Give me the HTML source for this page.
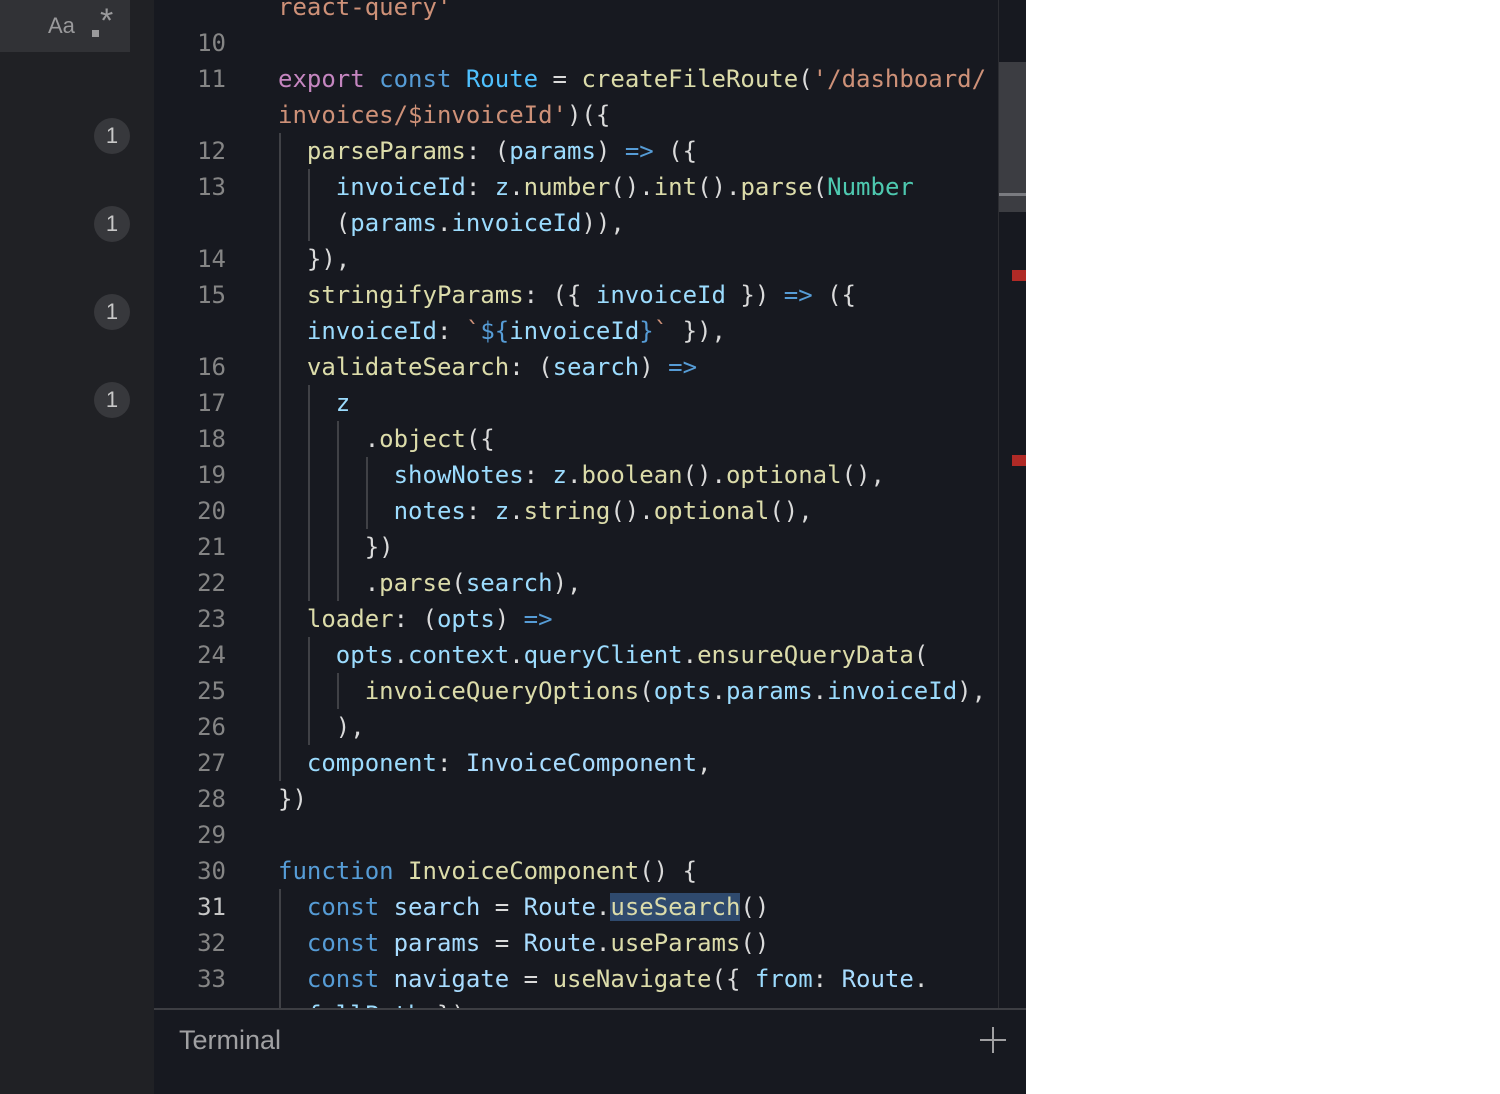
<!DOCTYPE html>
<html><head><meta charset="utf-8"><style>
html,body{margin:0;padding:0;width:1500px;height:1094px;overflow:hidden;background:#fff;}
#side{position:absolute;left:0;top:0;width:154px;height:1094px;background:#202125;}
#tb{position:absolute;left:0;top:0;width:130px;height:52px;background:#313236;}
#tb .aa{position:absolute;left:48px;top:13px;font:22px "Liberation Sans",sans-serif;color:#9a9a9c;}
#tb .sq{position:absolute;left:92px;top:30px;width:7px;height:7px;background:#9a9a9c;}
#tb .st{position:absolute;left:100px;top:4px;font:34px "Liberation Sans",sans-serif;color:#9a9a9c;line-height:34px;}
.badge{position:absolute;left:94px;width:36px;height:36px;border-radius:50%;background:#37383c;color:#c8c8c8;font:22px "Liberation Sans",sans-serif;text-align:center;line-height:36px;}
#ed{position:absolute;left:154px;top:0;width:872px;height:1094px;background:#171920;overflow:hidden;}
.row{position:absolute;left:0;height:36px;line-height:36px;width:844px;white-space:pre;font-family:"DejaVu Sans Mono","Liberation Mono",monospace;font-size:24px;color:#dadada;}
.ln{position:absolute;left:0;width:72px;text-align:right;color:#858585;}
.cd{position:absolute;left:124px;}
.g{position:absolute;width:2px;background:#404146;}
.k{color:#c586c0}.b{color:#569cd6}.v{color:#9cdcfe}.f{color:#dcdcaa}.s{color:#ce9178}.t{color:#4ec9b0}.c{color:#4fc1ff}.c2{color:#a8dcff}
#sb{position:absolute;left:844px;top:0;width:28px;height:1008px;border-left:1px solid #2c2d32;}
#term{position:absolute;left:0;top:1008px;width:872px;height:86px;background:#171920;border-top:2px solid #3d3e43;}
#term .tt{position:absolute;left:25px;top:15px;font:27px "Liberation Sans",sans-serif;color:#a0a0a2;}
</style></head><body>
<div id="side">
 <div id="tb"><span class="aa">Aa</span><span class="sq"></span><span class="st">*</span></div>
 <div class="badge" style="top:118px">1</div>
 <div class="badge" style="top:206px">1</div>
 <div class="badge" style="top:294px">1</div>
 <div class="badge" style="top:382px">1</div>
</div>
<div id="ed">
 <div class="g" style="left:125px;top:133px;height:648px"></div>
 <div class="g" style="left:154px;top:169px;height:72px"></div>
 <div class="g" style="left:154px;top:385px;height:216px"></div>
 <div class="g" style="left:154px;top:637px;height:108px"></div>
 <div class="g" style="left:183px;top:421px;height:180px"></div>
 <div class="g" style="left:183px;top:673px;height:36px"></div>
 <div class="g" style="left:212px;top:457px;height:72px"></div>
 <div class="g" style="left:125px;top:889px;height:130px"></div>

 <div class="row" style="top:-11px"><span class="cd s">react-query'</span></div>
 <div class="row" style="top:25px"><span class="ln">10</span></div>
 <div class="row" style="top:61px"><span class="ln">11</span><span class="cd"><span class="k">export</span> <span class="b">const</span> <span class="c">Route</span> = <span class="f">createFileRoute</span>(<span class="s">'/dashboard/</span></span></div>
 <div class="row" style="top:97px"><span class="cd"><span class="s">invoices/$invoiceId'</span>)({</span></div>
 <div class="row" style="top:133px"><span class="ln">12</span><span class="cd">  <span class="f">parseParams</span>: (<span class="v">params</span>) <span class="b">=&gt;</span> ({</span></div>
 <div class="row" style="top:169px"><span class="ln">13</span><span class="cd">    <span class="v">invoiceId</span>: <span class="v">z</span>.<span class="f">number</span>().<span class="f">int</span>().<span class="f">parse</span>(<span class="t">Number</span></span></div>
 <div class="row" style="top:205px"><span class="cd">    (<span class="v">params</span>.<span class="v">invoiceId</span>)),</span></div>
 <div class="row" style="top:241px"><span class="ln">14</span><span class="cd">  }),</span></div>
 <div class="row" style="top:277px"><span class="ln">15</span><span class="cd">  <span class="f">stringifyParams</span>: ({ <span class="v">invoiceId</span> }) <span class="b">=&gt;</span> ({</span></div>
 <div class="row" style="top:313px"><span class="cd">  <span class="v">invoiceId</span>: <span class="s">`</span><span class="b">${</span><span class="v">invoiceId</span><span class="b">}</span><span class="s">`</span> }),</span></div>
 <div class="row" style="top:349px"><span class="ln">16</span><span class="cd">  <span class="f">validateSearch</span>: (<span class="v">search</span>) <span class="b">=&gt;</span></span></div>
 <div class="row" style="top:385px"><span class="ln">17</span><span class="cd">    <span class="v">z</span></span></div>
 <div class="row" style="top:421px"><span class="ln">18</span><span class="cd">      .<span class="f">object</span>({</span></div>
 <div class="row" style="top:457px"><span class="ln">19</span><span class="cd">        <span class="v">showNotes</span>: <span class="v">z</span>.<span class="f">boolean</span>().<span class="f">optional</span>(),</span></div>
 <div class="row" style="top:493px"><span class="ln">20</span><span class="cd">        <span class="v">notes</span>: <span class="v">z</span>.<span class="f">string</span>().<span class="f">optional</span>(),</span></div>
 <div class="row" style="top:529px"><span class="ln">21</span><span class="cd">      })</span></div>
 <div class="row" style="top:565px"><span class="ln">22</span><span class="cd">      .<span class="f">parse</span>(<span class="v">search</span>),</span></div>
 <div class="row" style="top:601px"><span class="ln">23</span><span class="cd">  <span class="f">loader</span>: (<span class="v">opts</span>) <span class="b">=&gt;</span></span></div>
 <div class="row" style="top:637px"><span class="ln">24</span><span class="cd">    <span class="v">opts</span>.<span class="v">context</span>.<span class="v">queryClient</span>.<span class="f">ensureQueryData</span>(</span></div>
 <div class="row" style="top:673px"><span class="ln">25</span><span class="cd">      <span class="f">invoiceQueryOptions</span>(<span class="v">opts</span>.<span class="v">params</span>.<span class="v">invoiceId</span>),</span></div>
 <div class="row" style="top:709px"><span class="ln">26</span><span class="cd">    ),</span></div>
 <div class="row" style="top:745px"><span class="ln">27</span><span class="cd">  <span class="v">component</span>: <span class="c2">InvoiceComponent</span>,</span></div>
 <div class="row" style="top:781px"><span class="ln">28</span><span class="cd">})</span></div>
 <div class="row" style="top:817px"><span class="ln">29</span></div>
 <div class="row" style="top:853px"><span class="ln">30</span><span class="cd"><span class="b">function</span> <span class="f">InvoiceComponent</span>() {</span></div>
 <div class="row" style="top:889px"><span class="ln" style="color:#c6c6c6">31</span><span class="cd">  <span class="b">const</span> <span class="c2">search</span> = <span class="c2">Route</span>.<span class="f" style="background:#2f4a6e">useSearch</span>()</span></div>
 <div class="row" style="top:925px"><span class="ln">32</span><span class="cd">  <span class="b">const</span> <span class="c2">params</span> = <span class="c2">Route</span>.<span class="f">useParams</span>()</span></div>
 <div class="row" style="top:961px"><span class="ln">33</span><span class="cd">  <span class="b">const</span> <span class="c2">navigate</span> = <span class="f">useNavigate</span>({ <span class="v">from</span>: <span class="c2">Route</span>.</span></div>
 <div class="row" style="top:997px"><span class="cd">  <span class="v">fullPath</span> })</span></div>

 <div id="sb">
  <div style="position:absolute;left:0;top:62px;width:28px;height:150px;background:#3c3d42"></div>
  <div style="position:absolute;left:0;top:193px;width:28px;height:3px;background:#7a7b80"></div>
  <div style="position:absolute;left:13px;top:270px;width:15px;height:11px;background:#b02a26"></div>
  <div style="position:absolute;left:13px;top:455px;width:15px;height:11px;background:#b02a26"></div>
 </div>
 <div id="term">
  <span class="tt">Terminal</span>
  <div style="position:absolute;left:826px;top:29px;width:26px;height:2px;background:#a0a0a2"></div>
  <div style="position:absolute;left:838px;top:17px;width:2px;height:26px;background:#a0a0a2"></div>
 </div>
</div>
</body></html>
